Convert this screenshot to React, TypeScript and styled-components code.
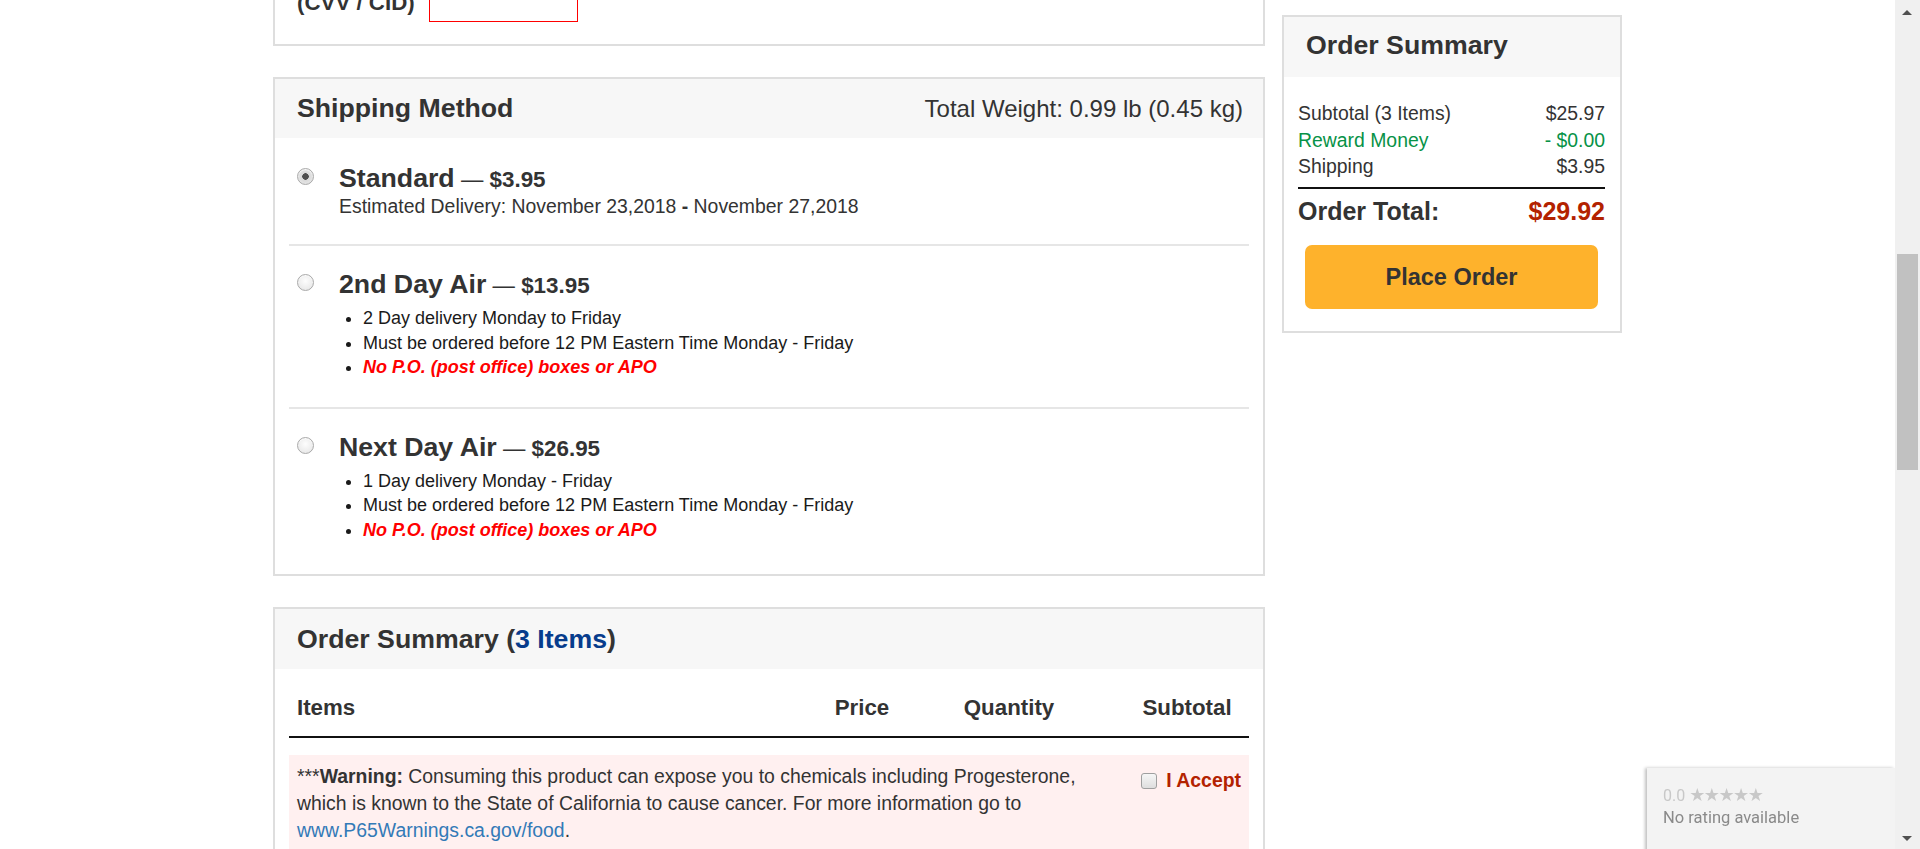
import React from 'react';
import styled, { createGlobalStyle } from 'styled-components';

const GlobalStyle = createGlobalStyle`
	html, body {
		margin: 0;
		padding: 0;
		overflow: hidden;
		background: #fff;
	}
	body {
		font-family: 'Liberation Sans', Arial, Helvetica, sans-serif;
		color: #333;
	}
	* {
		box-sizing: border-box;
	}
`;

const Page = styled.div`
	width: calc(100vw - 25px);
	height: 849px;
	overflow: hidden;
	display: flex;
	justify-content: center;
	align-items: flex-start;
	gap: 17px;
`;

const MainColumn = styled.main`
	width: 992px;
	margin-top: -40px;
	display: flex;
	flex-direction: column;
	gap: 31px;
`;

const Panel = styled.section`
	border: 2px solid #dedede;
	background: #fff;
`;

const PanelHeader = styled.header<{ $height?: number }>`
	height: ${p => p.$height || 59}px;
	background: #f7f7f7;
	display: flex;
	align-items: center;
	justify-content: space-between;
	padding: 0 20px 0 22px;
`;

const PanelTitle = styled.h2`
	margin: 0;
	font-size: 26.7px;
	font-weight: bold;
	color: #333;
	white-space: nowrap;
`;

const ItemCount = styled.span`
	color: #073c8c;
`;

const Weight = styled.div`
	font-size: 24px;
	color: #333;
`;

/* payment (cut at top of viewport) */
const PaymentBody = styled.div`
	padding: 22px;
`;

const CvvRow = styled.div`
	display: flex;
	align-items: center;
	gap: 14px;
`;

const CvvLabel = styled.label`
	font-size: 22.3px;
	font-weight: bold;
	color: #333;
`;

const CvvInput = styled.input`
	width: 149px;
	height: 38px;
	border: 1px solid #f00;
	outline: none;
	font: inherit;
`;

/* shipping */
const ShippingBody = styled.div`
	padding: 4px 14px 5px;
`;

const Option = styled.div`
	display: flex;
	align-items: flex-start;
	gap: 25px;
	padding: 21px 8px 25px;
	& + & {
		padding-top: 23px;
		border-top: 2px solid #e6e6e6;
	}
`;

const Radio = styled.input.attrs({ type: 'radio' })`
	appearance: none;
	flex: none;
	width: 17px;
	height: 17px;
	margin: 5px 0 0;
	border-radius: 50%;
	border: 1px solid #a9a9a9;
	background: radial-gradient(circle at 50% 40%, #fdfdfd 0%, #e3e3e3 100%);
	box-shadow: inset 0 1px 1px rgba(255, 255, 255, 0.8);
	&:checked {
		background: radial-gradient(circle, #4f4f4f 0 3px, #d9d9d9 3.5px, #eeeeee 100%);
	}
`;

const OptionInfo = styled.div`
	flex: 1;
`;

const OptionTitle = styled.div`
	font-size: 26.7px;
	line-height: 30px;
	font-weight: bold;
	color: #333;
`;

const Dash = styled.span`
	font-size: 22.4px;
	line-height: 1;
	font-weight: normal;
`;

const Price = styled.span`
	font-size: 22.4px;
	line-height: 1;
	font-weight: bold;
`;

const Delivery = styled.div`
	font-size: 19.4px;
	line-height: 26px;
	color: #333;
`;

const Notes = styled.ul`
	list-style: none;
	margin: 7px 0 2px;
	padding: 0;
`;

const Note = styled.li<{ $alert?: boolean }>`
	position: relative;
	padding-left: 24px;
	font-size: 18px;
	line-height: 24.5px;
	color: ${p => (p.$alert ? '#f00' : '#1a1a1a')};
	font-weight: ${p => (p.$alert ? 'bold' : 'normal')};
	font-style: ${p => (p.$alert ? 'italic' : 'normal')};
	&::before {
		content: '';
		position: absolute;
		left: 7px;
		top: 11px;
		width: 5px;
		height: 5px;
		border-radius: 50%;
		background: #1a1a1a;
	}
`;

/* order summary table */
const SummaryBody = styled.div`
	padding: 14px 14px 0;
`;

const TableHead = styled.div`
	display: grid;
	grid-template-columns: 1fr 110px 208px 124px;
	padding: 9px 0 13px;
	border-bottom: 2px solid #111;
`;

const HeadCell = styled.div<{ $align?: string; $pr?: number }>`
	font-size: 22.3px;
	line-height: 31px;
	font-weight: bold;
	color: #333;
	text-align: ${p => p.$align || 'center'};
	padding: 0 ${p => p.$pr || 0}px 0 ${p => (p.$align === 'left' ? 8 : 0)}px;
`;

const WarningBox = styled.div`
	margin-top: 17px;
	background: #fff0f0;
	padding: 8px;
	display: flex;
	align-items: flex-start;
`;

const WarningText = styled.p`
	flex: 1;
	margin: 0;
	font-size: 19.4px;
	line-height: 27px;
	color: #333;
	a {
		color: #337ab7;
		text-decoration: none;
	}
`;

const Accept = styled.label`
	flex: none;
	display: flex;
	align-items: center;
	gap: 9px;
	margin-left: 24px;
	padding-top: 6px;
	font-size: 19.4px;
	font-weight: bold;
	color: #b32200;
`;

const Checkbox = styled.input.attrs({ type: 'checkbox' })`
	appearance: none;
	width: 16px;
	height: 16px;
	margin: 0;
	border: 1px solid #9f9f9f;
	border-radius: 3px;
	background: linear-gradient(#f6f6f6, #dedede);
`;

/* sidebar */
const Sidebar = styled.aside`
	width: 340px;
	margin-top: 15px;
	border: 2px solid #dedede;
	background: #fff;
`;

const SideHeader = styled.header`
	background: #f7f7f7;
	padding: 12px 22px 16px;
	h2 {
		margin: 0;
		font-size: 26.7px;
		line-height: 32px;
		font-weight: bold;
		color: #333;
	}
`;

const SideBody = styled.div`
	padding: 23px 15px 22px 14px;
`;

const Lines = styled.div`
	padding-bottom: 7px;
	border-bottom: 2px solid #111;
`;

const Line = styled.div<{ $green?: boolean }>`
	display: flex;
	justify-content: space-between;
	font-size: 19.4px;
	line-height: 26.7px;
	color: ${p => (p.$green ? '#079247' : '#333')};
`;

const TotalRow = styled.div`
	display: flex;
	justify-content: space-between;
	padding-top: 7px;
	font-size: 25px;
	line-height: 30px;
	font-weight: bold;
	color: #333;
	span:last-child {
		color: #b32200;
	}
`;

const PlaceOrder = styled.button`
	display: flex;
	align-items: center;
	justify-content: center;
	width: calc(100% - 14px);
	height: 64px;
	margin: 19px 7px 0;
	border: none;
	border-radius: 7px;
	background: #feb22c;
	font-family: inherit;
	font-size: 23.5px;
	font-weight: bold;
	color: #333;
	cursor: pointer;
`;

/* browser chrome overlays */
const Scrollbar = styled.div`
	position: fixed;
	top: 0;
	right: 0;
	width: 25px;
	height: 100vh;
	background: #f0f0f0;
`;

const Thumb = styled.div`
	position: absolute;
	left: 2px;
	top: 254px;
	width: 21px;
	height: 216px;
	background: #c1c1c1;
`;

const Arrow = styled.div<{ $down?: boolean }>`
	position: absolute;
	left: 7px;
	${p => (p.$down ? 'bottom: 8px;' : 'top: 10px;')}
	width: 0;
	height: 0;
	border-left: 5px solid transparent;
	border-right: 5px solid transparent;
	${p =>
		p.$down
			? 'border-top: 5px solid #505050;'
			: 'border-bottom: 5px solid #505050;'}
`;

const RatingBadge = styled.div`
	position: fixed;
	left: 1647px;
	top: 768px;
	width: 248px;
	height: 90px;
	background: #f3f3f3;
	box-shadow: -2px 0 3px rgba(0, 0, 0, 0.25);
	padding: 16px 16px;
	font-family: Roboto, 'Noto Sans', sans-serif;
`;

const Stars = styled.div`
	font-size: 16px;
	line-height: 22px;
	color: #c8c8c8;
	span {
		font-family: 'DejaVu Sans', sans-serif;
		font-size: 18px;
		letter-spacing: -1.5px;
	}
`;

const NoRating = styled.div`
	font-size: 16.5px;
	line-height: 22px;
	color: #8a8a8a;
`;

const options = [
	{
		name: 'Standard',
		price: '$3.95',
		checked: true,
		delivery: true,
	},
	{
		name: '2nd Day Air',
		price: '$13.95',
		notes: [
			'2 Day delivery Monday to Friday',
			'Must be ordered before 12 PM Eastern Time Monday - Friday',
		],
	},
	{
		name: 'Next Day Air',
		price: '$26.95',
		notes: [
			'1 Day delivery Monday - Friday',
			'Must be ordered before 12 PM Eastern Time Monday - Friday',
		],
	},
];

export default function App() {
	return (
		<>
			<GlobalStyle />
			<Page>
				<MainColumn>
					<Panel>
						<PaymentBody>
							<CvvRow>
								<CvvLabel>(CVV / CID)</CvvLabel>
								<CvvInput />
							</CvvRow>
						</PaymentBody>
					</Panel>

					<Panel>
						<PanelHeader>
							<PanelTitle>Shipping Method</PanelTitle>
							<Weight>Total Weight: 0.99 lb (0.45 kg)</Weight>
						</PanelHeader>
						<ShippingBody>
							{options.map(o => (
								<Option key={o.name}>
									<Radio name="ship" defaultChecked={o.checked} />
									<OptionInfo>
										<OptionTitle>
											{o.name}
											<Dash> — </Dash>
											<Price>{o.price}</Price>
										</OptionTitle>
										{o.delivery && (
											<Delivery>
												Estimated Delivery: November 23,2018 <b>-</b> November
												27,2018
											</Delivery>
										)}
										{o.notes && (
											<Notes>
												{o.notes.map(n => (
													<Note key={n}>{n}</Note>
												))}
												<Note $alert>No P.O. (post office) boxes or APO</Note>
											</Notes>
										)}
									</OptionInfo>
								</Option>
							))}
						</ShippingBody>
					</Panel>

					<Panel>
						<PanelHeader $height={60}>
							<PanelTitle>
								Order Summary (<ItemCount>3 Items</ItemCount>)
							</PanelTitle>
						</PanelHeader>
						<SummaryBody>
							<TableHead>
								<HeadCell $align="left">Items</HeadCell>
								<HeadCell>Price</HeadCell>
								<HeadCell $pr={24}>Quantity</HeadCell>
								<HeadCell>Subtotal</HeadCell>
							</TableHead>
							<WarningBox>
								<WarningText>
									***<b>Warning:</b> Consuming this product can expose you to
									chemicals including Progesterone, which is known to the State of
									California to cause cancer. For more information go to{' '}
									<a href="#">www.P65Warnings.ca.gov/food</a>.
								</WarningText>
								<Accept>
									<Checkbox />I Accept
								</Accept>
							</WarningBox>
						</SummaryBody>
					</Panel>
				</MainColumn>

				<Sidebar>
					<SideHeader>
						<h2>Order Summary</h2>
					</SideHeader>
					<SideBody>
						<Lines>
							<Line>
								<span>Subtotal (3 Items)</span>
								<span>$25.97</span>
							</Line>
							<Line $green>
								<span>Reward Money</span>
								<span>- $0.00</span>
							</Line>
							<Line>
								<span>Shipping</span>
								<span>$3.95</span>
							</Line>
						</Lines>
						<TotalRow>
							<span>Order Total:</span>
							<span>$29.92</span>
						</TotalRow>
						<PlaceOrder>Place Order</PlaceOrder>
					</SideBody>
				</Sidebar>
			</Page>

			<RatingBadge>
				<Stars>
					0.0 <span>★★★★★</span>
				</Stars>
				<NoRating>No rating available</NoRating>
			</RatingBadge>

			<Scrollbar>
				<Arrow />
				<Thumb />
				<Arrow $down />
			</Scrollbar>
		</>
	);
}
